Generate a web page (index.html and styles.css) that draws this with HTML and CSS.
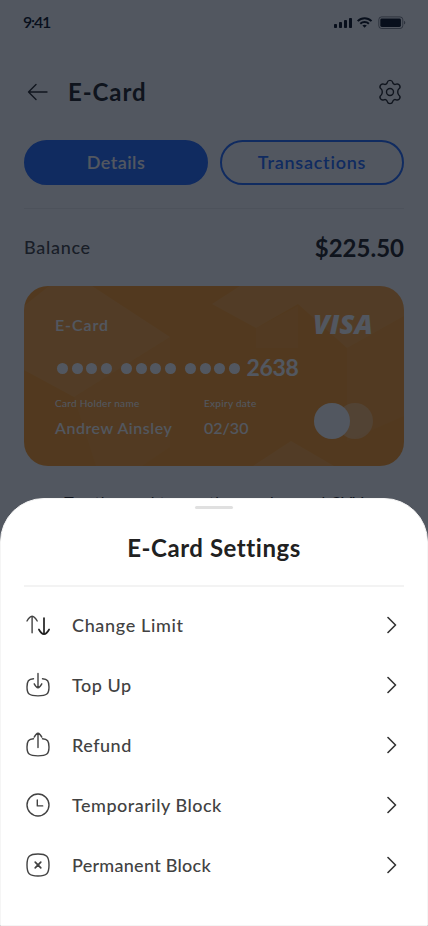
FILE: index.html
```html
<!DOCTYPE html>
<html lang="en">
<head>
<meta charset="utf-8">
<meta name="viewport" content="width=device-width, initial-scale=1">
<title>E-Card Settings</title>
<link rel="stylesheet" href="styles.css">
</head>
<body>
<div class="screen">
  <main class="page">
    <div class="status">
      <span class="time">9:41</span>
      <svg class="status-icons" width="72" height="14" viewBox="0 0 72 14" fill="currentColor">
        <rect x="0" y="8" width="3" height="4" rx=".8"/><rect x="5" y="6" width="3" height="6" rx=".8"/><rect x="10" y="4" width="3" height="8" rx=".8"/><rect x="15" y="2" width="3" height="10" rx=".8"/>
        <g fill="none" stroke="currentColor" stroke-width="2"><path d="M23.7 5.1a9.8 9.8 0 0 1 13.8 0"/><path d="M26.3 7.8a6.2 6.2 0 0 1 8.600 0"/></g>
        <path d="M30.6 11.8l-2.2-2.2a3.4 3.4 0 0 1 4.4 0z"/>
        <rect x="44.8" y=".9" width="24" height="11.6" rx="2.8" fill="none" stroke="currentColor" stroke-opacity=".5"/>
        <rect x="46.3" y="2.5" width="20.6" height="8.4" rx="1.4"/><path d="M70 4.8c1.8.7 1.8 3.1 0 3.8z" opacity=".5"/>
      </svg>
    </div>
    <header class="header">
      <svg class="back" width="28" height="28" viewBox="0 0 28 28"><path d="M23 14H4.5M12 6.5 4.5 14l7.5 7.5"/></svg>
      <h1>E-Card</h1>
      <svg class="gear" width="28" height="28" viewBox="0 0 28 28"><path d="M11.3 4.4q.5-2 2.7-2t2.7 2c.4 1.8 1.8 2.5 3.5 1.8q2.2-.8 3.4 1.1 1.2 2.2-.6 3.5c-1.7 1.3-1.7 5.1 0 6.4q1.8 1.3.6 3.5-1.2 1.900-3.400 1.100c-1.700-.7-3.100 0-3.500 1.800q-.5 2-2.700 2t-2.700-2c-.4-1.800-1.800-2.500-3.500-1.800q-2.200.8-3.400-1.100-1.200-2.200.6-3.500c1.700-1.300 1.700-5.100 0-6.400q-1.800-1.300-.6-3.500 1.200-1.900 3.400-1.100c1.700.7 3.100 0 3.500-1.800z"/><circle cx="14" cy="14" r="3.5"/></svg>
    </header>
    <nav class="tabs"><button class="tab active"><span>Details</span></button><button class="tab transactions"><span>Transactions</span></button></nav>
    <section class="balance"><span class="balance-label">Balance</span><strong>$225.50</strong></section>
    <section class="card">
      <svg class="facets" viewBox="0 0 380 180" preserveAspectRatio="none">
        <path class="facet-light" d="M0 20 25 0h43l78 51-96 60L0 84z"/>
        <path class="facet-soft" d="M146 51v110l-28 19H72L50 111z"/>
        <path class="facet-light" d="M188 18 216 0h90l-32 18-42 24z"/>
        <path class="facet-soft" d="m232 42 42-22v42l-42 0z"/>
        <path class="facet-light" d="m274 18 32-18h74v30l-57 32z"/>
        <path class="facet-soft" d="m323 62 57-32v100l-57 25z"/>
        <path class="facet-light" d="m229 180 38-25 43 25z"/>
      </svg>
      <div class="card-body">
        <div class="card-top"><span class="card-name">E-Card</span><span class="visa">VISA</span></div>
        <div class="number">
          <span class="dots"><i></i><i></i><i></i><i></i></span><span class="dots"><i></i><i></i><i></i><i></i></span><span class="dots"><i></i><i></i><i></i><i></i></span><span class="last">2638</span>
        </div>
        <div class="card-foot">
          <div class="holder"><small>Card Holder name</small><span>Andrew Ainsley</span></div>
          <div class="expiry"><small>Expiry date</small><span>02/30</span></div>
          <div class="circles"><i></i><i></i></div>
        </div>
      </div>
    </section>
    <p class="hint">Tap the card to see the number and CVV</p>
  </main>
  <div class="scrim"></div>
  <section class="sheet">
    <div class="grip"></div>
    <h2>E-Card Settings</h2>
    <ul class="menu">
      <li><svg class="icon" viewBox="0 0 28 28"><path d="M8.100 21.800V5.200M3 10q2.500-4.500 5.100-4.800Q10.700 5.500 13.200 10"/><path class="dark" d="M20 7v16M14.900 18.500q2.500 4.500 5.100 4.700 2.600-.2 5.100-4.700"/></svg><span class="limit">Change Limit</span><svg class="chevron" viewBox="0 0 10 18"><path d="m1 1.500 7.500 7.500L1 16.500"/></svg></li>
      <li><svg class="icon" viewBox="0 0 28 28"><path d="M9.500 7.800C4.500 8 3 10.200 3 16c0 7 2.100 8.900 11 8.900S25 23 25 16c0-5.800-1.500-8-6.500-8.200M14 2.500v14M10.200 12.800q2 3.700 3.800 3.900 1.800-.2 3.800-3.900"/></svg><span>Top Up</span><svg class="chevron" viewBox="0 0 10 18"><path d="m1 1.500 7.500 7.500L1 16.500"/></svg></li>
      <li><svg class="icon" viewBox="0 0 28 28"><path d="M9.500 7.800C4.500 8 3 10.200 3 16c0 7 2.100 8.900 11 8.900S25 23 25 16c0-5.800-1.500-8-6.500-8.200M14 16.500V2.200M10.200 6.100q2-3.700 3.800-3.900 1.800.2 3.800 3.900"/></svg><span>Refund</span><svg class="chevron" viewBox="0 0 10 18"><path d="m1 1.500 7.500 7.500L1 16.500"/></svg></li>
      <li><svg class="icon" viewBox="0 0 28 28"><circle cx="14" cy="14" r="11"/><path d="M13.300 9v5.900h5.400"/></svg><span>Temporarily Block</span><svg class="chevron" viewBox="0 0 10 18"><path d="m1 1.500 7.500 7.500L1 16.500"/></svg></li>
      <li><svg class="icon" viewBox="0 0 28 28"><path d="M14 3c8.700 0 11 2.300 11 11s-2.300 11-11 11S3 22.700 3 14 5.300 3 14 3z"/><path class="cross" d="m11.200 11.200 5.600 5.600m0-5.600-5.600 5.600"/></svg><span class="permanent">Permanent Block</span><svg class="chevron" viewBox="0 0 10 18"><path d="m1 1.500 7.500 7.500L1 16.500"/></svg></li>
    </ul>
  </section>
</div>
</body>
</html>
```

FILE: styles.css
```css
* { box-sizing: border-box; margin: 0; padding: 0; }
body { background: #fff; font-family: Lato, "Liberation Sans", sans-serif; font-variant-ligatures: none; color: #212121; }
.screen { position: relative; width: 428px; height: 926px; overflow: hidden; }
.page { height: 926px; padding: 0 24px; }
.status { height: 44px; margin: 0 -1px; display: flex; align-items: center; justify-content: space-between; color: #09101d; }
.time { margin-top: -2px; font-size: 16px; font-weight: 600; letter-spacing: -1.2px; }
.status-icons { margin: 2px -1px 0 0; }
.header { height: 96px; display: flex; align-items: center; }
.header svg, .icon, .chevron { fill: none; stroke: currentColor; stroke-width: 1.4; stroke-linecap: round; stroke-linejoin: round; }
.header h1 { font-size: 24px; font-weight: 700; line-height: 28px; margin-left: 16px; letter-spacing: .9px; }
.gear { margin-left: auto; }
.tabs { display: flex; gap: 12px; height: 69px; padding-bottom: 23px; border-bottom: 1px solid #eee; }
.tab { flex: 1; border: 2px solid #246bfd; border-radius: 23px; background: none; color: #246bfd; font: 600 18px/41px Lato, sans-serif; letter-spacing: .45px; }
.tab.transactions { letter-spacing: .75px; }
.tab.active { background: #246bfd; color: #fff; }
.balance { height: 77px; display: flex; align-items: center; justify-content: space-between; }
.balance-label { margin-top: -2px; color: #424242; font-size: 18px; font-weight: 500; letter-spacing: .7px; }
.balance strong { font-size: 24px; font-weight: 700; }
.card { position: relative; height: 180px; border-radius: 24px; overflow: hidden; background: #ff9c27; color: #fff; }
.facets { position: absolute; inset: 0; width: 100%; height: 100%; }
.facet-light { fill: #fff; opacity: .11; }
.facet-soft { fill: #fff; opacity: .04; }
.card-body { position: relative; height: 180px; padding: 24px 31px 26px; }
.card-top { height: 30px; display: flex; justify-content: space-between; align-items: center; }
.card-name { margin-top: -2px; font-size: 16px; font-weight: 600; letter-spacing: .9px; }
.visa { margin-top: -2px; font: italic 800 27px/30px "Open Sans", sans-serif; letter-spacing: .2px; }
.number { height: 30px; margin-top: 12px; padding-left: 2px; display: flex; align-items: center; }
.dots { display: flex; gap: 3.5px; margin-right: 9.5px; padding-top: 3px; }
.dots:nth-child(3) { margin-right: 7px; }
.dots i { width: 11px; height: 11px; border-radius: 50%; background: #fff; }
.last { margin-top: -1px; font-size: 23px; font-weight: 700; letter-spacing: -.3px; }
.card-foot { height: 44px; margin-top: 14px; display: flex; }
.holder { width: 149px; }
.card-foot small { display: block; font-size: 10px; line-height: 14px; letter-spacing: .3px; }
.card-foot span { display: block; margin-top: 7px; font-size: 16px; font-weight: 500; line-height: 22px; white-space: nowrap; }
.holder span { letter-spacing: .55px; }
.circles { margin: 7px 0 0 auto; display: flex; height: 36px; }
.circles i { width: 36px; height: 36px; border-radius: 50%; background: #fff; }
.circles i + i { margin-left: -13px; opacity: .3; }
.hint { margin: 25px -10px 0; text-align: center; font-size: 16px; line-height: 22px; letter-spacing: .4px; }
.scrim { position: absolute; inset: 0; background: rgba(9, 16, 29, .7); }
.sheet { position: absolute; left: 0; right: 0; bottom: 0; height: 428px; padding: 7px 23px 0; border: 1px solid #f5f5f5; border-radius: 44px 44px 0 0; background: #fff; }
.grip { width: 38px; height: 3px; margin: 0 auto; background: #e0e0e0; border-radius: 2px; }
.sheet h2 { height: 78px; font-size: 24px; font-weight: 700; line-height: 77px; text-align: center; letter-spacing: .55px; border-bottom: 2px solid #f3f3f3; }
.menu { list-style: none; padding-top: 8px; }
.menu li { height: 60px; display: flex; align-items: center; color: #424242; font-size: 18px; font-weight: 500; letter-spacing: .5px; }
.menu .limit { letter-spacing: .65px; }
.menu .permanent { letter-spacing: .27px; }
.icon { width: 28px; height: 28px; margin-right: 20px; }
.icon .dark { stroke: #212121; stroke-width: 1.700; }
.icon .cross { stroke-width: 1.700; }
.chevron { width: 10px; height: 18px; margin: 0 7px 0 auto; color: #333; stroke-width: 1.600; }
```
